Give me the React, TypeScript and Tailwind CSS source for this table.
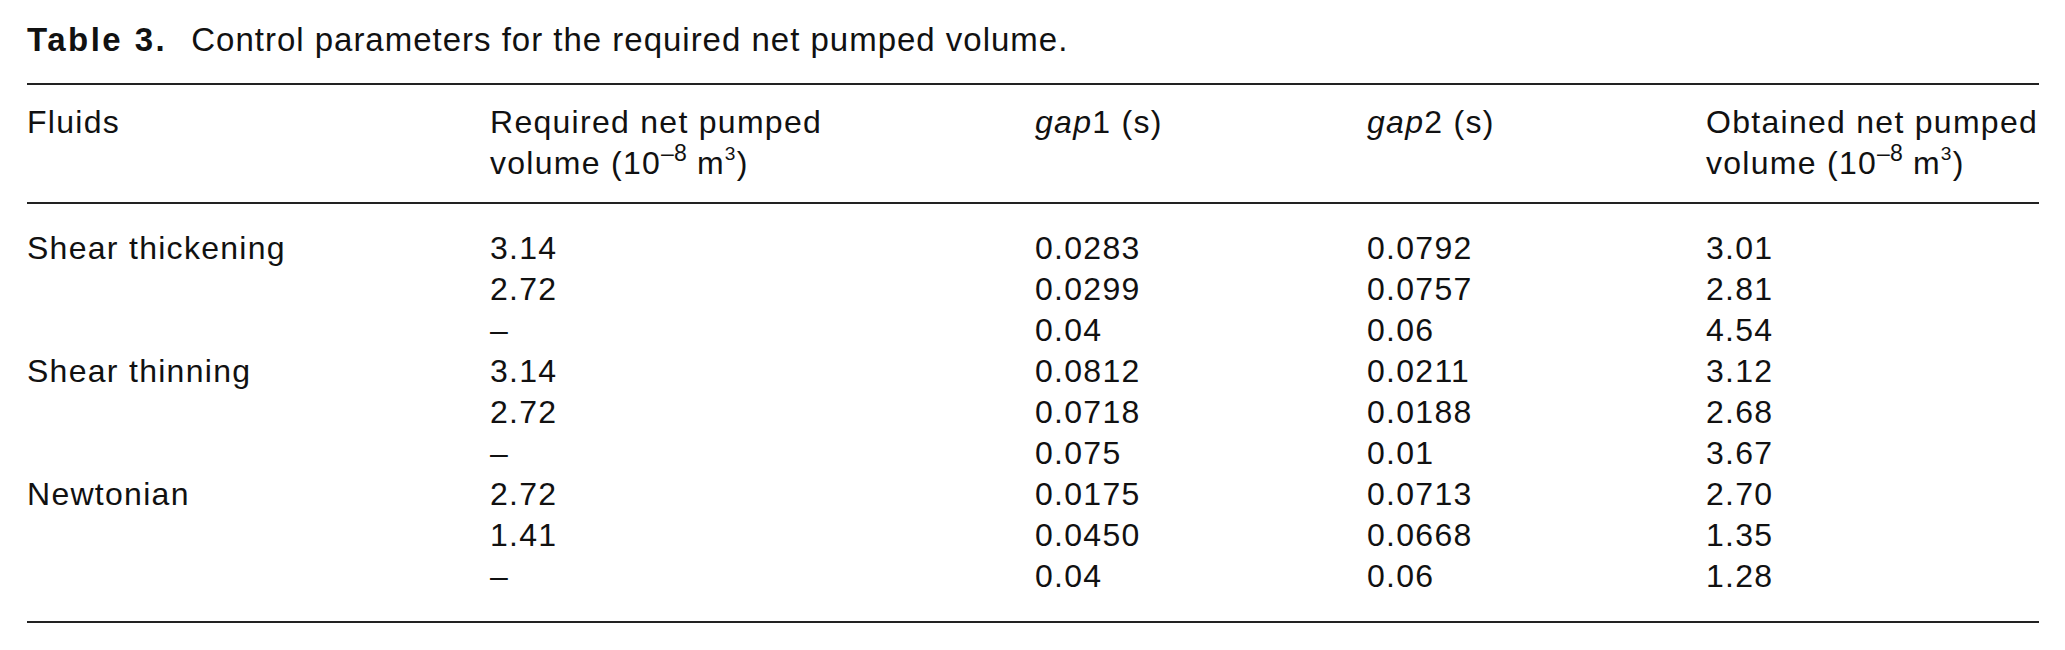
import React from "react";

interface Row {
  fluid: string;
  required: string;
  gap1: string;
  gap2: string;
  obtained: string;
}

const ROWS: Row[] = [
  { fluid: "Shear thickening", required: "3.14", gap1: "0.0283", gap2: "0.0792", obtained: "3.01" },
  { fluid: "", required: "2.72", gap1: "0.0299", gap2: "0.0757", obtained: "2.81" },
  { fluid: "", required: "–", gap1: "0.04", gap2: "0.06", obtained: "4.54" },
  { fluid: "Shear thinning", required: "3.14", gap1: "0.0812", gap2: "0.0211", obtained: "3.12" },
  { fluid: "", required: "2.72", gap1: "0.0718", gap2: "0.0188", obtained: "2.68" },
  { fluid: "", required: "–", gap1: "0.075", gap2: "0.01", obtained: "3.67" },
  { fluid: "Newtonian", required: "2.72", gap1: "0.0175", gap2: "0.0713", obtained: "2.70" },
  { fluid: "", required: "1.41", gap1: "0.0450", gap2: "0.0668", obtained: "1.35" },
  { fluid: "", required: "–", gap1: "0.04", gap2: "0.06", obtained: "1.28" },
];

function Volume({ label }: { label: string }) {
  return (
    <>
      {label}
      <br />
      volume (10<sup className="text-[0.72em] -top-[0.55em] tracking-normal">–8</sup> m<sup className="text-[0.6em] -top-[0.75em]">3</sup>)
    </>
  );
}

export default function App() {
  const cell = (i: number) =>
    `${i === 0 ? "pt-[24px]" : ""} ${i === ROWS.length - 1 ? "pb-[24px]" : ""}`;

  return (
    <div
      className="w-[2065px] h-[650px] bg-white text-[#111] pl-[27px] pt-[19px]"
      style={{ fontFamily: '"Liberation Sans", Arial, sans-serif' }}
    >
      {/* Caption */}
      <p className="whitespace-nowrap text-[33px] leading-[41px] tracking-[0.03em]">
        <span className="font-bold tracking-[0.075em]">Table 3.</span>
        <span className="ml-[24px]">Control parameters for the required net pumped volume.</span>
      </p>

      {/* Table */}
      <table className="w-[2012px] table-fixed border-collapse mt-[23px] border-t-2 border-b-2 border-[#222] text-[32px] leading-[41px] tracking-[0.04em]">
        <colgroup>
          <col className="w-[463px]" />
          <col className="w-[545px]" />
          <col className="w-[332px]" />
          <col className="w-[339px]" />
          <col />
        </colgroup>
        <thead>
          <tr className="border-b-2 border-[#222] text-left align-top">
            <th className="font-normal pt-[17px] pb-[18px]">Fluids</th>
            <th className="font-normal pt-[17px] pb-[18px] whitespace-nowrap">
              <Volume label="Required net pumped" />
            </th>
            <th className="font-normal pt-[17px] pb-[18px] whitespace-nowrap">
              <i>gap</i>1 (s)
            </th>
            <th className="font-normal pt-[17px] pb-[18px] whitespace-nowrap">
              <i>gap</i>2 (s)
            </th>
            <th className="font-normal pt-[17px] pb-[18px] whitespace-nowrap">
              <Volume label="Obtained net pumped" />
            </th>
          </tr>
        </thead>
        <tbody>
          {ROWS.map((r, i) => (
            <tr key={i} className="text-left">
              <td className={`whitespace-nowrap ${cell(i)}`}>{r.fluid}</td>
              <td className={cell(i)}>{r.required}</td>
              <td className={cell(i)}>{r.gap1}</td>
              <td className={cell(i)}>{r.gap2}</td>
              <td className={cell(i)}>{r.obtained}</td>
            </tr>
          ))}
        </tbody>
      </table>
    </div>
  );
}
